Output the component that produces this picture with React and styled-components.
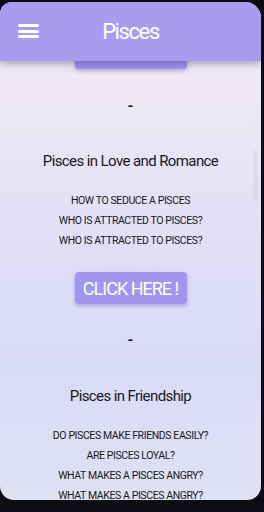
import React from "react";
import styled, { createGlobalStyle } from "styled-components";

const headerColor = "#a99cf0";
const buttonColor = "#a295ef";
const ink = "#191823";

const GlobalStyle = createGlobalStyle`
  html, body {
    margin: 0;
    padding: 0;
    background: #0d0c14;
  }
  body {
    font-family: "Roboto", "Noto Sans", sans-serif;
  }
`;

const Screen = styled.div`
  position: relative;
  width: 261px;
  height: 498px;
  margin-top: 2px;
  border-radius: 12px 16px 14px 14px;
  overflow: hidden;
  background: linear-gradient(
    180deg,
    #f3edf4 0%,
    #ece7f5 25%,
    #e1def6 50%,
    #d8dbf6 72%,
    #dfe2f3 100%
  );
`;

const Header = styled.header`
  position: absolute;
  top: 0;
  left: 0;
  right: 0;
  z-index: 2;
  height: 59px;
  display: flex;
  align-items: center;
  justify-content: center;
  background: ${headerColor};
  box-shadow: 0 3px 8px rgba(40, 30, 90, 0.35);
`;

const MenuButton = styled.button`
  position: absolute;
  left: 18px;
  top: 22px;
  width: 21px;
  height: 14px;
  padding: 0;
  border: none;
  background: transparent;
  display: flex;
  flex-direction: column;
  justify-content: space-between;
  & span {
    display: block;
    height: 3px;
    border-radius: 2px;
    background: #fff;
  }
`;

const Title = styled.h1`
  margin: 0;
  font-size: 22px;
  font-weight: 400;
  letter-spacing: -1.4px;
  color: #fff;
`;

const Content = styled.main`
  display: flex;
  flex-direction: column;
  align-items: center;
  padding-top: 35px;
`;

const ActionButton = styled.button`
  width: 112px;
  height: 32px;
  margin-top: ${p => p.$gap}px;
  padding: 0;
  border: none;
  border-radius: 4px;
  background: ${buttonColor};
  color: #fff;
  font-family: inherit;
  font-size: 18px;
  letter-spacing: -1px;
  box-shadow: 0 2px 4px rgba(60, 40, 140, 0.3);
`;

const Dash = styled.div`
  margin-top: ${p => p.$gap}px;
  line-height: 20px;
  font-size: 15px;
  font-weight: 700;
  color: ${ink};
`;

const SectionTitle = styled.h2`
  margin: ${p => p.$gap}px 0 0;
  line-height: 20px;
  font-size: 15px;
  font-weight: 400;
  letter-spacing: -0.6px;
  color: ${ink};
`;

const QuestionList = styled.ul`
  list-style: none;
  margin: 20px 0 0;
  padding: 0;
  text-align: center;
`;

const Question = styled.li`
  line-height: 20px;
  font-size: 10.5px;
  letter-spacing: -0.4px;
  color: ${ink};
`;

const ScrollThumb = styled.div`
  position: absolute;
  right: 3px;
  top: 148px;
  width: 5px;
  height: 52px;
  border-radius: 3px;
  background: rgba(60, 60, 90, 0.05);
`;

const sections = [
  {
    title: "Pisces in Love and Romance",
    gaps: { button: 0, dash: 27, title: 35 },
    questions: [
      "HOW TO SEDUCE A PISCES",
      "WHO IS ATTRACTED TO PISCES?",
      "WHO IS ATTRACTED TO PISCES?"
    ]
  },
  {
    title: "Pisces in Friendship",
    gaps: { button: 21, dash: 26, title: 36 },
    questions: [
      "DO PISCES MAKE FRIENDS EASILY?",
      "ARE PISCES LOYAL?",
      "WHAT MAKES A PISCES ANGRY?",
      "WHAT MAKES A PISCES ANGRY?"
    ]
  }
];

export default function App() {
  return (
    <>
      <GlobalStyle />
      <Screen>
        <Header>
          <MenuButton aria-label="menu">
            <span />
            <span />
            <span />
          </MenuButton>
          <Title>Pisces</Title>
        </Header>
        <Content>
          {sections.map(section => (
            <React.Fragment key={section.title}>
              <ActionButton $gap={section.gaps.button}>CLICK HERE !</ActionButton>
              <Dash $gap={section.gaps.dash}>-</Dash>
              <SectionTitle $gap={section.gaps.title}>{section.title}</SectionTitle>
              <QuestionList>
                {section.questions.map((q, j) => (
                  <Question key={j}>{q}</Question>
                ))}
              </QuestionList>
            </React.Fragment>
          ))}
        </Content>
        <ScrollThumb />
      </Screen>
    </>
  );
}
